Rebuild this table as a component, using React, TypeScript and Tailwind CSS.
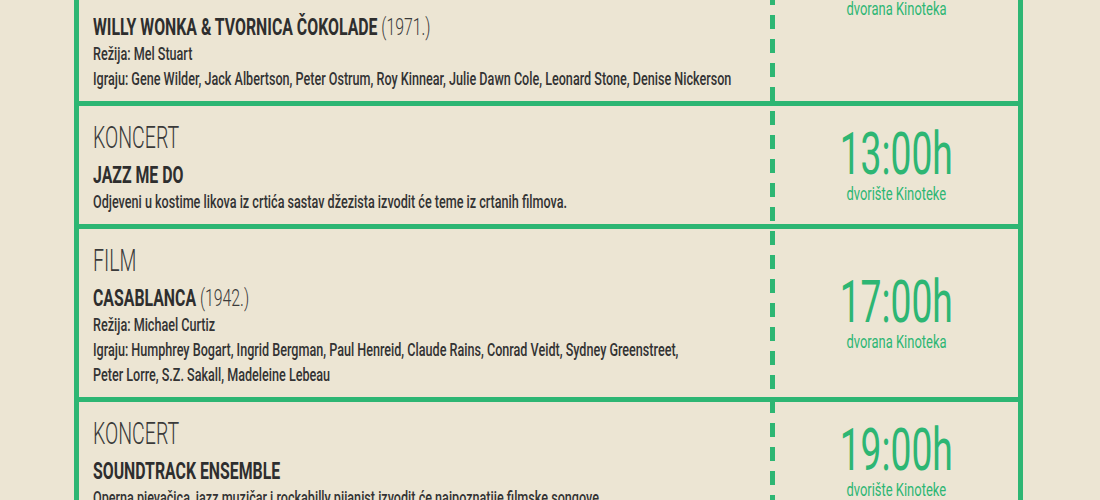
import React from 'react';

type Event = {
  label: string;
  title: string;
  year?: string;
  lines: string[];
  time: string;
  place: string;
};

const events: Event[] = [
  {
    label: 'FILM',
    title: 'WILLY WONKA & TVORNICA ČOKOLADE',
    year: '(1971.)',
    lines: [
      'Režija: Mel Stuart',
      'Igraju: Gene Wilder, Jack Albertson, Peter Ostrum, Roy Kinnear, Julie Dawn Cole, Leonard Stone, Denise Nickerson',
    ],
    time: '11:00h',
    place: 'dvorana Kinoteka',
  },
  {
    label: 'KONCERT',
    title: 'JAZZ ME DO',
    lines: ['Odjeveni u kostime likova iz crtića sastav džezista izvodit će teme iz crtanih filmova.'],
    time: '13:00h',
    place: 'dvorište Kinoteke',
  },
  {
    label: 'FILM',
    title: 'CASABLANCA',
    year: '(1942.)',
    lines: [
      'Režija: Michael Curtiz',
      'Igraju: Humphrey Bogart, Ingrid Bergman, Paul Henreid, Claude Rains, Conrad Veidt, Sydney Greenstreet,',
      'Peter Lorre, S.Z. Sakall, Madeleine Lebeau',
    ],
    time: '17:00h',
    place: 'dvorana Kinoteka',
  },
  {
    label: 'KONCERT',
    title: 'SOUNDTRACK ENSEMBLE',
    lines: ['Operna pjevačica, jazz muzičar i rockabilly pijanist izvodit će najpoznatije filmske songove.'],
    time: '19:00h',
    place: 'dvorište Kinoteke',
  },
];

function EventRow({ ev, first }: { ev: Event; first?: boolean }) {
  return (
    <div className="flex border-b-[5px] border-[#2db673]">
      <div className={`flex-1 min-w-0 flex flex-col pl-[14px] pt-[13px] pb-[10px] ${first ? 'justify-end' : ''}`}>
        <div className="origin-left scale-x-[0.61] whitespace-nowrap text-[32px] leading-[36px] font-light text-[#3a3a3a]">
          {ev.label}
        </div>
        <div className="mt-[6px] origin-left scale-x-[0.66] whitespace-nowrap text-[24px] leading-[28px] font-bold text-[#2e2e2e]">
          {ev.title}
          {ev.year && <span className="font-light text-[#3a3a3a]"> {ev.year}</span>}
        </div>
        {ev.lines.map((l) => (
          <div
            key={l}
            className="origin-left scale-x-[0.7] whitespace-nowrap text-[18px] leading-[25px] font-medium text-[#333333]"
          >
            {l}
          </div>
        ))}
      </div>

      {/* dashed divider */}
      <div className="w-[5px] shrink-0 bg-fixed bg-[repeating-linear-gradient(to_bottom,#2db673_0px,#2db673_5px,transparent_5px,transparent_15px,#2db673_15px,#2db673_24px)]" />

      <div
        className={`w-[243px] shrink-0 flex flex-col items-center ${first ? 'justify-end pb-[81px]' : 'justify-center'}`}
      >
        <div className="scale-x-[0.62] whitespace-nowrap text-[60px] leading-[58px] font-normal text-[#2db673]">
          {ev.time}
        </div>
        <div className="scale-x-[0.72] whitespace-nowrap text-[18px] leading-[22px] font-normal text-[#2db673]">
          {ev.place}
        </div>
      </div>
    </div>
  );
}

export default function App() {
  return (
    <div className="w-[1100px] h-[500px] overflow-hidden bg-[#ece5d3] font-[Roboto,sans-serif]">
      <div className="-mt-[65px] ml-[74px] w-[949px] border-x-[5px] border-t-[5px] border-[#2db673]">
        {events.map((ev, i) => (
          <EventRow key={ev.title} ev={ev} first={i === 0} />
        ))}
      </div>
    </div>
  );
}
